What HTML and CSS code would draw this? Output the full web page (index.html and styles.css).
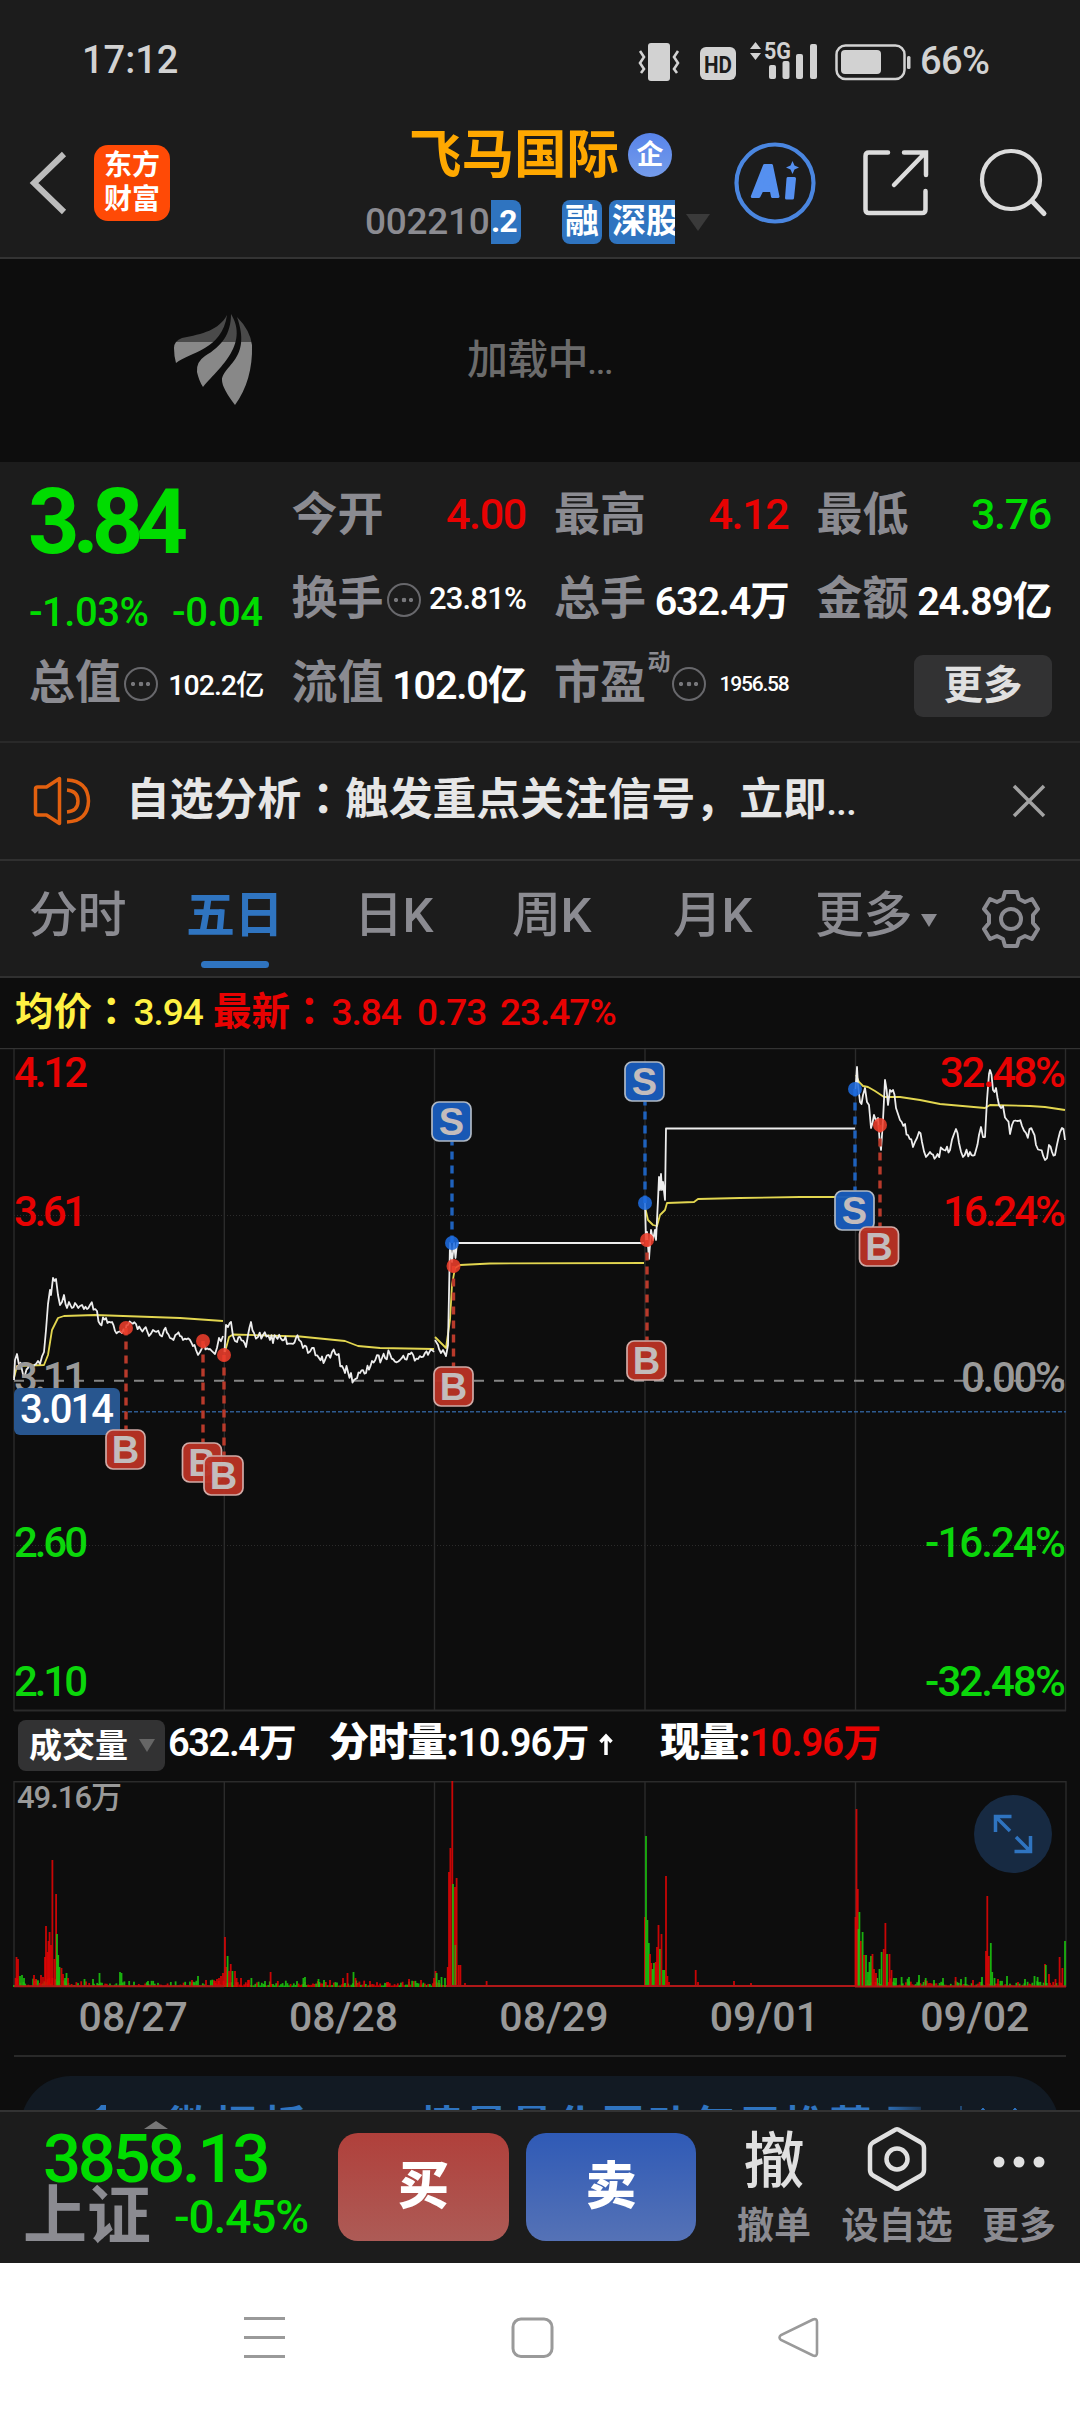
FILE: index.html
```html
<!DOCTYPE html>
<html lang="zh-CN">
<head>
<meta charset="utf-8">
<title>飞马国际 002210</title>
<link rel="stylesheet" href="styles.css">
</head>
<body>
<div class="statusbar">
  <span class="clock">17:12</span>
  <svg class="status-icons" width="285" height="50" viewBox="630 36 285 50">
    <g fill="#d2d2d2">
      <rect x="648" y="43" width="22" height="38" rx="3"/>
      <path d="M640 51l4 6-4 6 4 6-3 4M678 51l-4 6 4 6-4 6 3 4" fill="none" stroke="#d2d2d2" stroke-width="2.6"/>
      <rect x="700" y="47" width="36" height="33" rx="6"/>
      <path d="M750 49l5.500-7 5.500 7zM750 53l5.500 7 5.500-7z"/>
      <rect x="769" y="65" width="7" height="14" rx="2"/><rect x="782.500" y="61" width="7" height="18" rx="2"/><rect x="796" y="54" width="7" height="25" rx="2"/><rect x="810" y="44" width="7" height="35" rx="2"/>
      <rect x="841" y="50" width="40" height="24" rx="4"/><rect x="907" y="56" width="3.500" height="13" rx="1.500"/>
    </g>
    <rect x="836.500" y="45.500" width="68" height="33.500" rx="9" fill="none" stroke="#d2d2d2" stroke-width="2.500"/>
    <text x="718" y="72.500" text-anchor="middle" class="hd" textLength="28" lengthAdjust="spacingAndGlyphs">HD</text>
    <text x="764" y="59" class="fiveg" textLength="27" lengthAdjust="spacingAndGlyphs">5G</text>
  </svg>
  <span class="percent">66%</span>
</div>

<header class="header">
  <svg class="back" width="40" height="66" viewBox="0 0 40 66"><path d="M36 4L6 33l30 29" fill="none" stroke="#bcbcbc" stroke-width="6"/></svg>
  <div class="brand"><span>东方</span><span>财富</span></div>
  <div class="stock">
    <div class="stock-name"><span>飞马国际</span><i class="corp">企</i></div>
    <div class="stock-code"><span class="code">002210</span><b class="tag tag-l2">.2</b><b class="tag tag-rong">融</b><b class="tag tag-sz">深股</b><i class="caret"></i></div>
  </div>
  <svg class="head-icons" width="325" height="90" viewBox="730 138 325 90" fill="none" stroke-linecap="round">
    <circle cx="775" cy="183" r="38.500" stroke="#4a86e0" stroke-width="4.200"/>
    <path d="M764.500 165.500h7l6.500 31h-5.500l-1.200-6h-9.500l-3 6h-6.500zM767.500 178l-3 6h4.500zM788 178.500h6.500l-2 19.500h-6z" fill="#5590f0" fill-rule="evenodd" stroke="#5590f0" stroke-width="3" stroke-linejoin="round"/>
    <path d="M792.500 161l2 4.500 4.500 2-4.500 2-2 4.500-2-4.500-4.500-2 4.500-2z" fill="#5590f0"/>
    <path d="M888 152.500h-19q-3.500 0-3.500 3.500v53.500q0 3.500 3.500 3.500h53q3.500 0 3.500-3.500V191M904 152.500h22V175M924 154l-30 31" stroke="#dcdcdc" stroke-width="4.500"/>
    <circle cx="1011" cy="180" r="29" stroke="#dcdcdc" stroke-width="4.200"/><path d="M1032 201l12 12.500" stroke="#dcdcdc" stroke-width="5"/>
  </svg>
</header>

<section class="loading">
  <svg class="logo" width="80" height="92" viewBox="173 313 80 92">
    <defs><linearGradient id="fill" gradientUnits="userSpaceOnUse" x1="0" y1="313" x2="0" y2="405"><stop offset=".315" stop-color="#4a4a4a"/><stop offset=".315" stop-color="#888"/></linearGradient></defs>
    <g fill="url(#fill)"><path d="M227 315C219 330 203 334 182 338Q174 341 174 348Q174 356 176 363C190 352 222 350 227 315z"/><path d="M231 314C231 334 222 346 205 356Q196 362 197 372Q199 381 203 387C217 370 250 345 231 314z"/><path d="M237 317Q250 330 252 345Q253 380 235 405Q222 388 222 380C223 365 252 359 237 317z"/></g>
  </svg>
  <span class="loading-text">加载中<em>...</em></span>
</section>

<section class="quote">
  <div class="last">3.84</div>
  <div class="cell"><label>今开</label><span class="red v">4.00</span></div>
  <div class="cell"><label>最高</label><span class="red v">4.12</span></div>
  <div class="cell"><label>最低</label><span class="green v">3.76</span></div>
  <div class="change green"><span>-1.03%</span><span>-0.04</span></div>
  <div class="cell"><label>换手</label><i class="more-dot"></i><span class="v v31">23.81%</span></div>
  <div class="cell"><label>总手</label><span class="v v40">632.4万</span></div>
  <div class="cell"><label>金额</label><span class="v v40">24.89亿</span></div>
  <div class="cell"><label>总值</label><i class="more-dot"></i><span class="v v28">102.2亿</span></div>
  <div class="cell"><label>流值</label><span class="v v40">102.0亿</span></div>
  <div class="cell"><label>市盈</label><sup>动</sup><i class="more-dot"></i><span class="v v21">1956.58</span></div>
  <div class="cell"><button class="more-btn">更多</button></div>
</section>

<section class="notice">
  <svg width="60" height="50" viewBox="32 776 60 50" fill="none" stroke="#e2600f" stroke-width="3.500" stroke-linejoin="round"><path d="M35.500 789q0-2 2-2h9l13-8.500v45l-13-8.500h-9q-2 0-2-2zM67 780q21 1 21.500 21-.5 20-21.500 21M67 790q11 1 11 11t-11 11"/></svg>
  <span class="notice-text">自选分析<u lang="zh-TW">：</u>触发重点关注信号，立即<em>...</em></span>
  <svg class="close" width="36" height="36" viewBox="0 0 36 36"><path d="M3 3l30 30M33 3L3 33" stroke="#a2a2a2" stroke-width="3.500"/></svg>
</section>

<nav class="tabs">
  <span>分时</span><span class="active">五日</span><span>日K</span><span>周K</span><span>月K</span><span class="tab-more">更多<i></i></span>
  <svg width="60" height="62" viewBox="-30 -31 60 62" fill="none" stroke="#8b8b91" stroke-width="4" stroke-linejoin="round"><circle r="10"/><path d="M-6-27H6L8-20 14-17 21-20 27-10 22-4V4L27 10 21 20 14 17 8 20 6 27H-6L-8 20-14 17-21 20-27 10-22 4V-4L-27-10-21-20-14-17-8-20z"/></svg>
</nav>

<div class="legend"><span class="yellow">均价<u lang="zh-TW">：</u><em>3.94</em></span><span class="red">最新<u lang="zh-TW">：</u><em>3.84</em></span><span class="red"><em>0.73</em></span><span class="red"><em>23.47%</em></span></div>

<svg class="price-chart" id="price" width="1080" height="664" viewBox="0 1048 1080 664">
  <g stroke="#2b2b2b" stroke-width="2" fill="none">
    <path d="M0 1048.500H1080" stroke="#333" stroke-width="1.500"/>
    <path d="M14 1049V1711M224.300 1049V1711M434.500 1049V1711M645 1049V1711M855.500 1049V1711M1065.500 1049V1711" stroke-width="1.400"/><path d="M14 1710.500H1066"/>
    <path d="M14 1215.500H1066M14 1545.500H1066" stroke-dasharray="1 2" stroke-width="1"/>
    <path d="M14 1380.800H1066" stroke="#858585" stroke-dasharray="10 10" stroke-width="2"/>
    <path d="M14 1411.700H1066" stroke="#2d5a90" stroke-dasharray="4 2" stroke-width="1.500"/>
  </g>
  <g id="curves" fill="none" stroke-linejoin="round"></g>
  <g class="axis">
    <g fill="#e80202"><text x="14" y="1086.500" textLength="74">4.12</text><text x="14" y="1225.500" textLength="73">3.61</text><text x="940" y="1086.500" textLength="126">32.48%</text><text x="943" y="1225.500" textLength="123">16.24%</text></g>
    <g fill="#999"><text x="14" y="1391.500" textLength="73">3.11</text><text x="961" y="1391.500" textLength="105">0.00%</text></g>
    <g fill="#0bd60b"><text x="14" y="1557" textLength="74">2.60</text><text x="14" y="1695.500" textLength="74">2.10</text><text x="925" y="1557" textLength="141">-16.24%</text><text x="925" y="1695.500" textLength="141">-32.48%</text></g>
    <rect x="14" y="1388" width="106" height="47" rx="6" fill="#28568f"/><text x="20" y="1422.500" textLength="94" fill="#fff" class="cross">3.014</text>
  </g>
  <g id="marks"></g>
</svg>

<div class="volume-info"><button class="indicator">成交量<i></i></button><span class="w1">632.4万</span><span class="w2"><b>分时量:</b>10.96万 <svg width="18" height="24" viewBox="0 0 18 24"><path d="M9 3v19M3.500 9L9 3l5.500 6" fill="none" stroke="#fff" stroke-width="3.500"/></svg></span><span class="w3"><b>现量:</b><em class="red">10.96万</em></span></div>

<div class="volume">
  <svg width="1080" height="208" viewBox="0 1781 1080 208">
    <path d="M14 1987V1781.700H1066V1987M224.300 1781V1987M434.500 1781V1987M645 1781V1987M855.500 1781V1987" fill="none" stroke="#2b2b2b" stroke-width="1.400"/>
    <g id="bars"></g>
    <text x="17" y="1808" class="volmax" textLength="105">49.16万</text>
  </svg>
  <div class="expand"><svg width="40" height="40" viewBox="0 0 40 40" fill="none" stroke="#2f74c0" stroke-width="3.500"><path d="M2.500 18V2.500h16M3 3l14 14M37.500 22v15.500h-16M37 37L23 23"/></svg></div>
</div>

<div class="dates"><span>08/27</span><span>08/28</span><span>08/29</span><span>09/01</span><span>09/02</span></div>

<div class="promo-wrap"><div class="promo"><svg class="p-icon" width="14" height="40" viewBox="0 0 14 40"><path d="M8 0h5v40h-5V5L0 6Q6 4 8 0z" fill="#2f74c0"/></svg><span class="p-a">微据板一、</span><span class="p-b">情景量化回动每周推荐</span><span class="p-c">展</span><svg class="p-act" width="70" height="40" viewBox="0 0 70 40"><path d="M1 1v39M23 3l6 7-6 7-6-7zM55 3l6 7-6 7-6-7z" fill="#2f74c0" stroke="#2f74c0"/></svg></div></div>

<footer class="bottom">
  <div class="index"><i class="tri"></i><div class="idx-val">3858.13</div><div class="idx-row"><span>上证</span><b>-0.45%</b></div></div>
  <button class="trade buy">买</button><button class="trade sell">卖</button>
  <div class="act a1"><span class="big">撤</span><small>撤单</small></div>
  <div class="act a2"><svg width="60" height="66" viewBox="-30 -33 60 66" fill="none" stroke="#e0e0e0" stroke-width="4.500" stroke-linejoin="round"><path d="M-3-28.500Q0-31 3-28.500L24-16.500Q27-14.500 27-11V11Q27 14.500 24 16.500L3 28.500Q0 31-3 28.500L-24 16.500Q-27 14.500-27 11V-11Q-27-14.500-24-16.500z"/><circle r="10.500"/></svg><small>设自选</small></div>
  <div class="act a3"><svg width="60" height="66" viewBox="-30 -33 60 66" fill="#e0e0e0"><circle cx="-20" cy="3" r="5.500"/><circle cy="3" r="5.500"/><circle cx="20" cy="3" r="5.500"/></svg><small>更多</small></div>
</footer>

<div class="navbar">
  <svg width="1080" height="60" viewBox="0 2308 1080 60" fill="none" stroke="#9a9a9a" stroke-width="3"><path d="M244 2318.500h41M244 2337.500h41M244 2356.500h41"/><rect x="513" y="2319" width="39" height="37.500" rx="8"/><path d="M813 2319.500L781 2335q-3 2.500 0 5l32 15.500q4 1.500 4-2.500v-31q0-4-4-2.500z" stroke-width="2.600"/></svg>
</div>
<script src="script.js"></script>
</body>
</html>
```
FILE: styles.css
```css
* { box-sizing: border-box; }
body { margin: 0; width: 1080px; height: 2412px; overflow: hidden; background: #0d0d0d; color: #fff; font-family: Roboto, "Noto Sans CJK SC", sans-serif; font-weight: 500; display: flex; flex-direction: column; }
body > * { flex: none; }
i, em { font-style: normal; }
u { text-decoration: none; font-family: "Noto Sans CJK TC", sans-serif; line-height: 0; }
button { border: 0; font: inherit; color: inherit; padding: 0; }
svg { display: block; }
.red { color: #e80202; }
.green { color: #00dc00; }
.yellow { color: #fff143; }

.statusbar { height: 110px; background: #1c1c1c; display: flex; padding-left: 82px; color: #d2d2d2; font-size: 38px; }
.clock { width: 548px; margin-top: 37px; line-height: 46px; }
.status-icons { margin-top: 36px; }
.hd { font: 700 24px Roboto, sans-serif; fill: #1c1c1c; }
.fiveg { font: 700 24px Roboto, sans-serif; fill: #d2d2d2; }
.percent { margin: 38px 0 0 5px; line-height: 46px; font-size: 38px; letter-spacing: -.6px; }

.header { height: 149px; background: #1c1c1c; border-bottom: 2px solid #333; display: flex; }
.back { margin: 40px 0 0 28px; }
.brand { width: 76px; height: 76px; margin: 35px 0 0 26px; border-radius: 14px; background: #ff4a06; display: flex; flex-direction: column; align-items: center; justify-content: center; font-weight: 700; font-size: 28px; line-height: 34px; }
.stock { width: 350px; margin: 10px 0 0 194px; }
.stock-name { height: 70px; padding-left: 45px; display: flex; align-items: center; color: #ffa800; font-size: 52.5px; font-weight: 700; line-height: 70px; }
.corp { width: 44px; height: 44px; margin: 0 0 0 9px; border-radius: 50%; background: linear-gradient(#5884ea, #759cea); color: #fff; font-size: 27px; line-height: 44px; text-align: center; }
.stock-code { display: flex; align-items: center; height: 44px; margin-top: 10px; }
.code { width: 126px; margin: -2px 0 0 1px; color: #8b8b91; font-size: 37px; letter-spacing: -.3px; }
.tag { height: 44px; background: #2f74c0; font-size: 34px; line-height: 42px; overflow: hidden; white-space: nowrap; }
.tag-l2 { width: 30px; font-size: 32px; letter-spacing: -1px; border-radius: 0 8px 8px 0; }
.tag-rong { width: 40px; margin-left: 41px; padding-left: 3px; border-radius: 8px; }
.tag-sz { width: 66px; margin-left: 7px; padding-left: 3px; border-radius: 8px 0 0 8px; }
.caret { margin: 0 0 0 11px; border: 12.5px solid transparent; border-top: 17px solid #3a3a3a; border-bottom: 0; }
.head-icons { margin: 28px 0 0 16px; }

.loading { height: 203px; display: flex; }
.logo { margin: 54px 0 0 173px; }
.loading-text { margin: 71px 0 0 214px; font-size: 41px; line-height: 60px; color: #6b6b6b; letter-spacing: -.8px; }
.loading-text em { font-size: 33px; }

.quote { height: 281px; background: #1c1c1c; border-bottom: 2px solid #292929; padding: 10px 30px 0; display: grid; grid-template-columns: repeat(4, minmax(0, 1fr)); grid-template-rows: repeat(3, 84px); column-gap: 30px; }
.last { margin-left: -2px; color: #00dc00; font-size: 90px; font-weight: 700; line-height: 101px; letter-spacing: -7px; }
.change { display: flex; justify-content: space-between; margin-left: -1px; font-size: 40px; line-height: 113px; letter-spacing: -.5px; }
.cell { display: flex; align-items: center; white-space: nowrap; }
.cell label { margin-left: -1px; color: #8b8b91; font-size: 46px; font-weight: 700; line-height: 84px; }
.v { margin-left: auto; font-size: 43px; letter-spacing: -1.3px; margin-right: -1px; }
.v31 { font-size: 31px; letter-spacing: -.8px; }
.v40 { font-size: 39.500px; letter-spacing: -1.200px; font-weight: 600; margin-top: -2px; }
.v28 { font-size: 28.500px; letter-spacing: -1px; }
.v21 { font-size: 21px; letter-spacing: -1.200px; margin-top: 4px; }
.more-dot { width: 34px; height: 34px; margin: 3px 0 0 3px; border: 2.500px solid #68686c; border-radius: 50%; background: radial-gradient(circle, #77777b 2px, transparent 2.600px) 50% 50% / 8px 8px no-repeat, radial-gradient(circle at 7px 50%, #77777b 1.800px, transparent 2.400px), radial-gradient(circle at 22px 50%, #77777b 1.800px, transparent 2.400px); }
.cell sup { font-size: 23px; line-height: 24px; color: #8b8b91; align-self: flex-start; margin-top: 11px; width: 26px; text-align: center; font-weight: 700; }
.cell sup + .more-dot { margin-left: 0; }
.more-btn { margin: 8px -2px 0 auto; width: 138px; height: 62px; border-radius: 9px; background: #323233; color: #e0e0e0; font-size: 39.500px; font-weight: 700; line-height: 58px; }

.notice { height: 118px; background: #1c1c1c; border-bottom: 2px solid #303030; display: flex; align-items: center; padding-left: 32px; }
.notice-text { margin-left: 34px; width: 885px; font-size: 43.800px; font-weight: 700; line-height: 60px; color: #e6e6e6; }
.notice-text em { font-size: 34px; }

.tabs { height: 117px; background: #1c1c1c; border-bottom: 2px solid #303030; display: grid; grid-template-columns: 157px 170px 156px 161px 142px 166px 60px; padding-left: 29px; color: #8b8b91; font-size: 49px; line-height: 109px; }
.tabs span { position: relative; letter-spacing: -.6px; }
.tabs .active { color: #2f74c0; font-weight: 700; }
.tabs .active::after { content: ""; position: absolute; left: 15px; top: 100px; width: 68px; height: 7px; border-radius: 4px; background: #2f74c0; }
.tabs span:nth-child(3) { margin-left: -2px; }
.tab-more i { display: inline-block; margin-left: 9px; vertical-align: 5px; border: 8.500px solid transparent; border-top: 13px solid #8b8b91; border-bottom: 0; }
.tabs svg { margin-top: 27px; }

.legend { height: 70px; padding-left: 15px; display: flex; font-size: 38.500px; line-height: 68px; font-weight: 700; white-space: pre; }
.legend span:nth-child(1) { width: 198px; }
.legend span:nth-child(2) { width: 204px; }
.legend span:nth-child(3) { width: 83px; }
.legend em { font-weight: 500; font-size: 37px; letter-spacing: -1px; }
.legend u + em { margin-left: 3px; }

.axis text { font: 500 42px Roboto, sans-serif; }
.axis .cross { font-size: 40px; }
.mark text { font: 700 38px "Liberation Sans", Arial, sans-serif; fill: #c3bcbc; text-anchor: middle; }

.volume-info { height: 69px; display: flex; font-size: 38px; line-height: 62px; padding-left: 18px; white-space: nowrap; letter-spacing: -.8px; font-weight: 600; }
.indicator { width: 147px; height: 51px; margin-top: 8px; border-radius: 8px; background: #323233; display: flex; align-items: center; padding-left: 11px; font-size: 33px; font-weight: 700; letter-spacing: 0; line-height: 46px; }
.indicator i { margin-left: 11px; border: 8px solid transparent; border-top: 13px solid #666; border-bottom: 0; }
.w1 { margin-left: 3px; width: 161px; letter-spacing: -1.400px; }
.w2 { width: 331px; }
.w2 b, .w3 b { font-size: 40px; }
.w2 svg { display: inline-block; vertical-align: -1px; }

.volume { height: 208px; position: relative; }
.volmax { font: 500 31px Roboto, "Noto Sans CJK SC", sans-serif; fill: #999; }
.expand { position: absolute; left: 974px; top: 14px; width: 78px; height: 78px; border-radius: 50%; background: #172a42; display: grid; place-items: center; }
.dates { height: 68px; margin: 0 14px; padding-left: 14px; border-bottom: 2px solid #292929; display: grid; grid-template-columns: repeat(5, 210.4px); text-align: center; color: #999; font-size: 41px; line-height: 57px; }

.promo-wrap { height: 53px; padding: 19px 21px 0; overflow: hidden; }
.promo { height: 100px; border-radius: 50px; background: #121a23; color: #2f74c0; font-size: 42px; line-height: 101px; font-weight: 700; display: flex; padding-left: 72px; white-space: pre; }
.p-icon { margin: 29px 60px 0 0; }
.p-a { width: 253px; letter-spacing: 6px; }
.p-b { width: 463px; letter-spacing: 3.500px; }
.p-c { width: 77px; background: linear-gradient(90deg, #2f74c0, #1b3450 40px); background-clip: text; color: transparent; }
.p-act { margin-top: 29px; }

.bottom { height: 153px; background: #1c1c1c; border-top: 2px solid #333; display: flex; }
.index { position: relative; width: 338px; }
.tri { position: absolute; left: 144px; top: 9px; border: 12px solid transparent; border-bottom: 8px solid #777; border-top: 0; }
.idx-val { margin: 15px 0 0 43px; height: 60px; color: #00dc00; font-size: 67px; line-height: 64px; letter-spacing: -3.300px; }
.idx-row { display: flex; padding-left: 23px; line-height: 60px; color: #8b8b91; font-size: 64px; font-weight: 700; }
.idx-row b { margin-left: 23px; color: #00dc00; font-size: 46px; font-weight: 500; letter-spacing: -1.100px; }
.trade { width: 171px; height: 108px; margin: 21px 17px 0 0; border-radius: 20px; font-size: 51px; font-weight: 900; line-height: 104px; }
.buy { background: linear-gradient(#b0403b, #ad5b56); }
.sell { width: 170px; margin-right: 0; background: linear-gradient(#2f5ab6, #5572b6); }
.act { display: flex; flex-direction: column; align-items: center; padding-top: 14px; }
.act small { font-size: 37px; line-height: 50px; margin-top: 10px; color: #8b8b91; font-weight: 700; }
.act .big { font-size: 61px; line-height: 72px; height: 66px; font-weight: 500; color: #e0e0e0; }
.a1 { width: 74px; margin-left: 41px; }
.a2 { width: 112px; margin-left: 30px; }
.a3 { width: 76px; margin-left: 28px; }
.navbar { height: 149px; background: #fff; padding-top: 45px; }
```
FILE: script.js
```js
var NS = "http://www.w3.org/2000/svg";
var seed = 7;
function rnd() { seed = (seed * 16807) % 2147483647; return seed / 2147483647; }
function add(parent, tag, attrs, text) {
  var el = document.createElementNS(NS, tag);
  for (var k in attrs) el.setAttribute(k, attrs[k]);
  if (text) el.textContent = text;
  parent.appendChild(el);
  return el;
}

// price line per trading day: [x, y, ...] anchors and tick roughness
var price = [
  [5, [14,1380,15,1360,17,1354,19,1365,22,1370,25,1375,28,1368,31,1366,36,1364,38,1361,40,1364,44,1352,46,1330,48,1304,50,1290,51,1295,53,1278,56,1279,58,1295,60,1305,62,1302,64,1295,67,1308,69,1302,72,1308,75,1303,80,1306,84,1309,90,1305,97,1311,100,1324,106,1318,112,1322,118,1332,122,1333,128,1325,136,1324,144,1329,149,1336,153,1330,160,1335,164,1330,170,1338,177,1334,183,1340,190,1340,196,1350,200,1352,204,1345,210,1349,215,1354,219,1338,223,1336]],
  [5, [224.5,1352,226,1325,228,1327,231,1322,233,1336,237,1342,240,1337,246,1347,248,1335,251,1322,254,1333,258,1337,263,1335,270,1340,276,1337,284,1340,299,1340,303,1348,308,1353,312,1348,319,1358,325,1360,332,1352,337,1355,342,1366,348,1372,354,1380,360,1373,366,1373,372,1361,382,1358,390,1354,400,1360,410,1354,418,1359,425,1353,434,1352]],
  [0, [435,1340,438,1345,439,1349,441,1353,443,1350,446,1356,448,1345,450,1243,452,1262,454,1243,455.5,1258,457,1243,644,1243]],
  [0, [645,1203,646,1240,647,1232,649,1259,651,1230,653,1240,655,1230,656,1240,658,1200,659,1177,660,1190,661,1174,662,1190,663,1182,665,1200,666,1128.5,855,1128.5]],
  [6, [855.5,1089,857,1067,858,1085,860,1102,863,1095,865,1088,869,1105,871,1128,874,1115,878,1118,881,1150,883,1120,885,1080,888,1105,890,1090,893,1090,896,1108,900,1120,905,1124,908,1135,913,1147,917,1138,919,1132,922,1142,926,1157,930,1152,936,1157,944,1150,950,1150,954,1134,956,1129,959,1143,963,1157,970,1152,976,1150,979,1135,981,1127,985,1137,987,1100,989,1074,990,1070,993,1090,996,1088,999,1105,1003,1106,1007,1120,1010,1134,1012,1125,1022,1126,1026,1133,1033,1132,1036,1145,1040,1150,1045,1160,1049,1145,1055,1155,1060,1132,1062,1128,1065,1140]]
];
var average = [
  [14,1378,17,1366,44,1365,48,1355,52,1330,58,1318,64,1316,95,1315,180,1318,223,1321],
  [225,1352,229,1337,233,1334.5,300,1336.5,345,1341,358,1346,380,1348,434,1349],
  [435,1337,440,1342,446,1348,450,1320,452,1285,455,1268,460,1265,490,1263.5,644,1263],
  [645,1207,648,1220,653,1225,657,1226,660,1215,665,1210,667,1203,694,1202,698,1199,740,1198,800,1197,855,1197],
  [856,1075,859,1082,863,1086,868,1087,875,1091,881,1095,884,1097,900,1097,920,1100,940,1104,985,1108,990,1105,1030,1106,1045,1107,1065,1110]
];
var curves = document.getElementById("curves");
average.forEach(function (p) { add(curves, "polyline", { points: p.join(" "), stroke: "#e2d650", "stroke-width": 1.8 }); });
price.forEach(function (day) {
  var rough = day[0], p = day[1], out = [p[0], p[1]];
  for (var i = 2; i < p.length; i += 2) {
    var dx = p[i] - p[i - 2], n = rough ? Math.floor(dx / 1.5) : 0;
    for (var j = 1; j < n; j++) out.push((p[i - 2] + dx * j / n).toFixed(1), (p[i - 1] + (p[i + 1] - p[i - 1]) * j / n + (rnd() - 0.5) * rough * 1.9).toFixed(1));
    out.push(p[i], p[i + 1]);
  }
  add(curves, "polyline", { points: out.join(" "), stroke: "#ededed", "stroke-width": 1.8 });
});

// trades: type, dot x/y, badge x/y
var marks = document.getElementById("marks");
[["B",126,1328,125.5,1449.5],["B",203,1341,202,1462.5],["B",224,1355,223.5,1475.5],["S",452,1243,451.5,1121.5],["B",453.5,1266,453.5,1386.5],["S",645,1203,644.5,1081.5],["B",647,1240,646.5,1360.5],["S",855,1089,854.5,1210.500],["B",880,1125,879,1246.500]].forEach(function (m) {
  var sell = m[0] === "S", g = add(marks, "g", { "class": "mark" });
  var edge = m[4] > m[2] ? m[4] - 20 : m[4] + 20;
  add(g, "path", { d: "M" + m[1] + " " + edge + "V" + m[2], stroke: sell ? "#1f62bd" : "#b83a2b", "stroke-width": 3.4, "stroke-dasharray": "8 6", "stroke-dashoffset": 4 });
  add(g, "circle", { cx: m[1], cy: m[2], r: 7, fill: sell ? "#1e6ce0" : "#ee3e2c", "fill-opacity": 0.87 });
  add(g, "rect", { x: m[3] - 19.5, y: m[4] - 19.5, width: 39, height: 39, rx: 7, fill: sell ? "#195cbb" : "#b83224", "fill-opacity": 0.96, stroke: sell ? "#afb8c4" : "#d0aaa6", "stroke-width": 1.7 });
  add(g, "text", { x: m[3], y: m[4] + 13.5 }, m[0]);
});

// volume: x, height, side
var bars = document.getElementById("bars");
function bar(x, h, side) { add(bars, "rect", { x: x - 0.9, y: 1987 - h, width: 1.8, height: h, fill: side === "g" ? "#1bc70f" : "#e30404", "fill-opacity": 0.88 }); }
[[14,224],[225,446],[866,1065]].forEach(function (r) {
  for (var x = r[0]; x < r[1]; x += 1.6) {
    var near = (x < 75 || x > 205 && x < 250 || x > 866 && x < 940) ? 4 : 1;
    bar(x, 1.5 + Math.pow(rnd(), 2) * (4 + near), rnd() < 0.55 ? "r" : "g");
  }
});
("16.5 30 r,18 28 r,20 11 g,22 12 g,24 9 g,34 12 r,36 8 r,41 12 r,43 10 r,45 30 r,46 61 r,47.500 35 r,48.500 46 r,49.600 55 r,51 42 r,52.400 127 r,54.400 28 r,56.100 93 r,57 53 g,58.200 32 g,59.500 20 g,61.500 19 r,63 13 r,65 9 g,66.500 14 g,68 9 r,84.500 8 g,93 8 g,99.500 14 g,120 15 g,121.500 14 g,148 6 g,192 7 r,198 11 g," +
"215 6 r,217 8 r,219 9 r,221 11 r,223 14 r,225 50 r,226.200 20 r,227.600 31 g,229 16 r,230.700 23 r,232.500 16 g,235 16 r,236.600 9 r,241 9 r,248 7 r,251.400 9 g,265 6 g,270.600 15 r,303.400 9 g,305 10 g,318.500 8 g,324 7 g,330 7 r,343 9 r,347.500 14 r,353.500 15 g,355.500 9 r,370 6 r,387 5 r,409 8 r,421 7 r,434 9 r,435.600 16 r,436.600 14 g,439 7 g,441.500 10 g,445 9 g,447.700 20 r,449 115 r,450.400 139 r,452.300 206 r,453 103 g,455 100 r,455.500 42 g,456.600 109 r,458.700 22 r,460.400 22 r,465 4 r,486.600 6 r," +
"645 70 r,646 151 g,647.400 67 g,648.800 44 g,650 33 r,651.300 24 r,652.600 18 g,654 24 g,655.700 25 r,657 40 r,658.500 62 r,660 38 g,661.500 53 r,663 17 g,664.500 17 g,666 111 r,667.400 11 r,669 5 r,695.700 17 r,698 5 r,734 6 r,751 4 r," +
"855.500 70 r,856.500 178 r,857.800 98 r,858.500 58 g,859.400 75 g,860.800 46 r,862.600 55 g,864 32 r,866 32 g,868 15 g,869.500 25 g,871 31 g,872.500 33 r,874 18 r,876 14 r,879.500 18 g,881.600 35 g,883.700 38 r,885.400 64 r,887 33 g,889.500 33 r,891.500 17 r,894 9 g,896 9 g,901.600 10 g,909 10 g,919 12 g,925.700 9 g,934 7 g,943 9 g,955.600 10 r,961 8 g,965.600 10 g,973 7 r,982 10 g,986 36 r,987.300 91 r,988.900 31 r,990.800 44 g,992.200 15 g,994.500 9 g,998 8 r,1007 11 g,1025 8 g,1034.500 11 g,1037.600 10 g,1045 23 r,1045.800 22 g,1049 13 r,1055.500 8 r,1059.600 30 r,1062.400 19 r,1065 46 g").split(",").forEach(function (s) {
  var v = s.split(" ");
  bar(+v[0], +v[1], v[2]);
});
add(bars, "path", { d: "M14 1986.300H224M446 1986H855M855 1986.600H1066", stroke: "#b01818", "stroke-width": 2 });
```
